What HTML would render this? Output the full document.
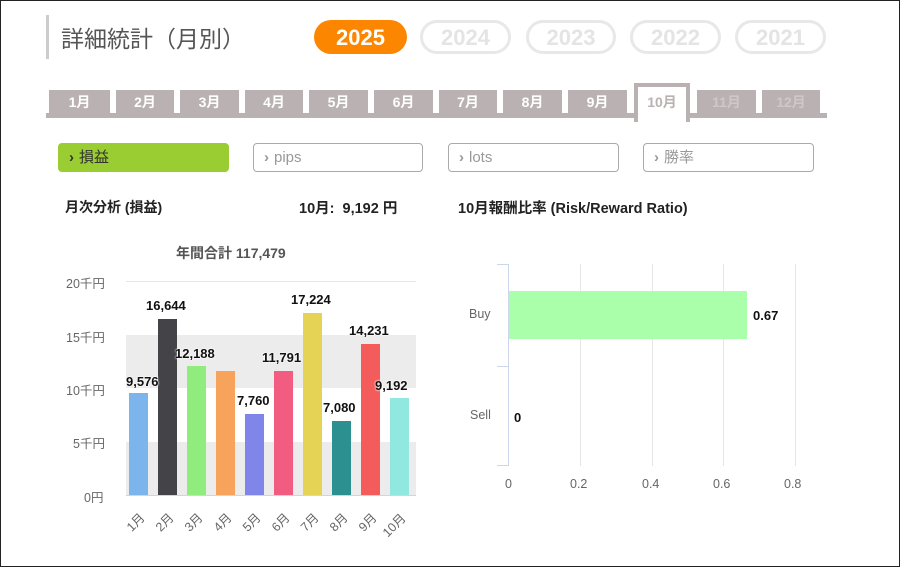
<!DOCTYPE html>
<html><head><meta charset="utf-8"><style>
body{margin:0;width:900px;height:567px;overflow:hidden;background:#fff;font-family:"Liberation Sans","Noto Sans CJK JP",sans-serif;}
.frame{position:absolute;left:0;top:0;width:898px;height:565px;border:1px solid #222;}
.a{position:absolute;}
.pill{position:absolute;top:20px;height:28px;border:3px solid #e8e8e8;border-radius:17px;color:#e4e4e4;font-weight:bold;font-size:22px;text-align:center;line-height:29px;}
.tab{position:absolute;top:90px;height:23px;background:#bab2b2;color:#fff;font-weight:bold;font-size:14px;text-align:center;line-height:24px;}
.btn{position:absolute;top:143px;height:27px;border:1px solid #aaa;border-radius:4px;color:#999;font-size:15px;line-height:27px;}
.btn span{font-weight:bold;margin:0 5px 0 10px;}
.lbl{position:absolute;font-size:12.5px;color:#666;}
.val{position:absolute;font-size:13px;font-weight:bold;color:#111;text-shadow:0 0 2px #fff,0 0 2px #fff;}
</style></head><body>
<div class="frame"></div>
<div class="a" style="left:46px;top:15px;width:3px;height:44px;background:#ccc"></div>
<div class="a" style="left:61px;top:20px;font-size:23px;color:#555">詳細統計（月別）</div>
<div class="pill" style="left:314px;width:93px;top:20px;height:34px;border:none;background:#fd8600;color:#fff;line-height:36px">2025</div>
<div class="pill" style="left:420px;width:85px">2024</div>
<div class="pill" style="left:526px;width:84px">2023</div>
<div class="pill" style="left:630px;width:85px">2022</div>
<div class="pill" style="left:735px;width:85px">2021</div>

<div class="a" style="left:46px;top:113px;width:781px;height:5px;background:#bab2b2"></div>
<div class="tab" style="left:49px;width:61px">1月</div>
<div class="tab" style="left:116px;width:58px">2月</div>
<div class="tab" style="left:180px;width:59px">3月</div>
<div class="tab" style="left:245px;width:58px">4月</div>
<div class="tab" style="left:309px;width:59px">5月</div>
<div class="tab" style="left:374px;width:59px">6月</div>
<div class="tab" style="left:439px;width:58px">7月</div>
<div class="tab" style="left:503px;width:59px">8月</div>
<div class="tab" style="left:568px;width:59px">9月</div>
<div class="a" style="left:634px;top:83px;width:48px;height:35px;border:4px solid #bab2b2;border-bottom:none;background:#fff;color:#bab2b2;font-weight:bold;font-size:14px;text-align:center;line-height:30px">10月</div>
<div class="tab" style="left:697px;width:59px;color:#cfc8c8">11月</div>
<div class="tab" style="left:762px;width:58px;color:#cfc8c8">12月</div>

<div class="btn" style="left:58px;width:169px;background:#9acd32;border-color:#9acd32;color:#333"><span>›</span>損益</div>
<div class="btn" style="left:253px;width:168px"><span>›</span>pips</div>
<div class="btn" style="left:448px;width:169px"><span>›</span>lots</div>
<div class="btn" style="left:643px;width:169px"><span>›</span>勝率</div>

<div class="a" style="left:65px;top:197px;font-size:14px;font-weight:bold;color:#222">月次分析 (損益)</div>
<div class="a" style="left:299px;top:197px;font-size:14.5px;font-weight:bold;color:#222">10月:&nbsp; 9,192 円</div>
<div class="a" style="left:458px;top:197px;font-size:14.5px;font-weight:bold;color:#222">10月報酬比率 (Risk/Reward Ratio)</div>

<div class="a" style="left:176px;top:243px;font-size:14px;font-weight:bold;color:#555">年間合計 117,479</div>

<div class="a" style="left:126px;top:281px;width:290px;height:1px;background:#e6e6e6"></div>
<div class="a" style="left:126px;top:335px;width:290px;height:53px;background:#ececec"></div>
<div class="a" style="left:126px;top:442px;width:290px;height:53px;background:#ececec"></div>
<div class="a" style="left:126px;top:495px;width:290px;height:1px;background:#ccd6eb"></div>
<div class="lbl" style="left:66px;top:273px">20千円</div>
<div class="lbl" style="left:66px;top:327px">15千円</div>
<div class="lbl" style="left:66px;top:380px">10千円</div>
<div class="lbl" style="left:73px;top:433px">5千円</div>
<div class="lbl" style="left:84px;top:487px">0円</div>

<div class="a" style="left:129px;top:393px;width:19px;height:102px;background:#7cb5ec"></div>
<div class="a" style="left:158px;top:319px;width:19px;height:176px;background:#434348"></div>
<div class="a" style="left:187px;top:366px;width:19px;height:129px;background:#90ed7d"></div>
<div class="a" style="left:216px;top:371px;width:19px;height:124px;background:#f7a35c"></div>
<div class="a" style="left:245px;top:414px;width:19px;height:81px;background:#8085e9"></div>
<div class="a" style="left:274px;top:371px;width:19px;height:124px;background:#f15c80"></div>
<div class="a" style="left:303px;top:313px;width:19px;height:182px;background:#e4d354"></div>
<div class="a" style="left:332px;top:421px;width:19px;height:74px;background:#2b908f"></div>
<div class="a" style="left:361px;top:344px;width:19px;height:151px;background:#f45b5b"></div>
<div class="a" style="left:390px;top:398px;width:19px;height:97px;background:#91e8e1"></div>

<div class="val" style="left:126px;top:374px">9,576</div>
<div class="val" style="left:146px;top:298px">16,644</div>
<div class="val" style="left:175px;top:346px">12,188</div>
<div class="val" style="left:237px;top:393px">7,760</div>
<div class="val" style="left:262px;top:350px">11,791</div>
<div class="val" style="left:291px;top:292px">17,224</div>
<div class="val" style="left:323px;top:400px">7,080</div>
<div class="val" style="left:349px;top:323px">14,231</div>
<div class="val" style="left:375px;top:378px">9,192</div>

<div class="lbl" style="left:125px;top:512px;transform:rotate(-45deg)">1月</div>
<div class="lbl" style="left:154px;top:512px;transform:rotate(-45deg)">2月</div>
<div class="lbl" style="left:183px;top:512px;transform:rotate(-45deg)">3月</div>
<div class="lbl" style="left:212px;top:512px;transform:rotate(-45deg)">4月</div>
<div class="lbl" style="left:241px;top:512px;transform:rotate(-45deg)">5月</div>
<div class="lbl" style="left:270px;top:512px;transform:rotate(-45deg)">6月</div>
<div class="lbl" style="left:299px;top:512px;transform:rotate(-45deg)">7月</div>
<div class="lbl" style="left:328px;top:512px;transform:rotate(-45deg)">8月</div>
<div class="lbl" style="left:357px;top:512px;transform:rotate(-45deg)">9月</div>
<div class="lbl" style="left:380px;top:515px;transform:rotate(-45deg)">10月</div>

<div class="a" style="left:580px;top:264px;width:1px;height:202px;background:#e6e6e6"></div>
<div class="a" style="left:652px;top:264px;width:1px;height:202px;background:#e6e6e6"></div>
<div class="a" style="left:723px;top:264px;width:1px;height:202px;background:#e6e6e6"></div>
<div class="a" style="left:795px;top:264px;width:1px;height:202px;background:#e6e6e6"></div>
<div class="a" style="left:508px;top:264px;width:1px;height:202px;background:#ccd6eb"></div>
<div class="a" style="left:497px;top:264px;width:11px;height:1px;background:#ccd6eb"></div>
<div class="a" style="left:497px;top:366px;width:11px;height:1px;background:#ccd6eb"></div>
<div class="a" style="left:497px;top:465px;width:11px;height:1px;background:#ccd6eb"></div>
<div class="a" style="left:509px;top:291px;width:238px;height:48px;background:#aaffaa"></div>
<div class="lbl" style="left:469px;top:307px">Buy</div>
<div class="lbl" style="left:470px;top:408px">Sell</div>
<div class="val" style="left:753px;top:308px">0.67</div>
<div class="val" style="left:514px;top:410px">0</div>
<div class="lbl" style="left:505px;top:477px">0</div>
<div class="lbl" style="left:570px;top:477px">0.2</div>
<div class="lbl" style="left:642px;top:477px">0.4</div>
<div class="lbl" style="left:713px;top:477px">0.6</div>
<div class="lbl" style="left:784px;top:477px">0.8</div>
</body></html>
